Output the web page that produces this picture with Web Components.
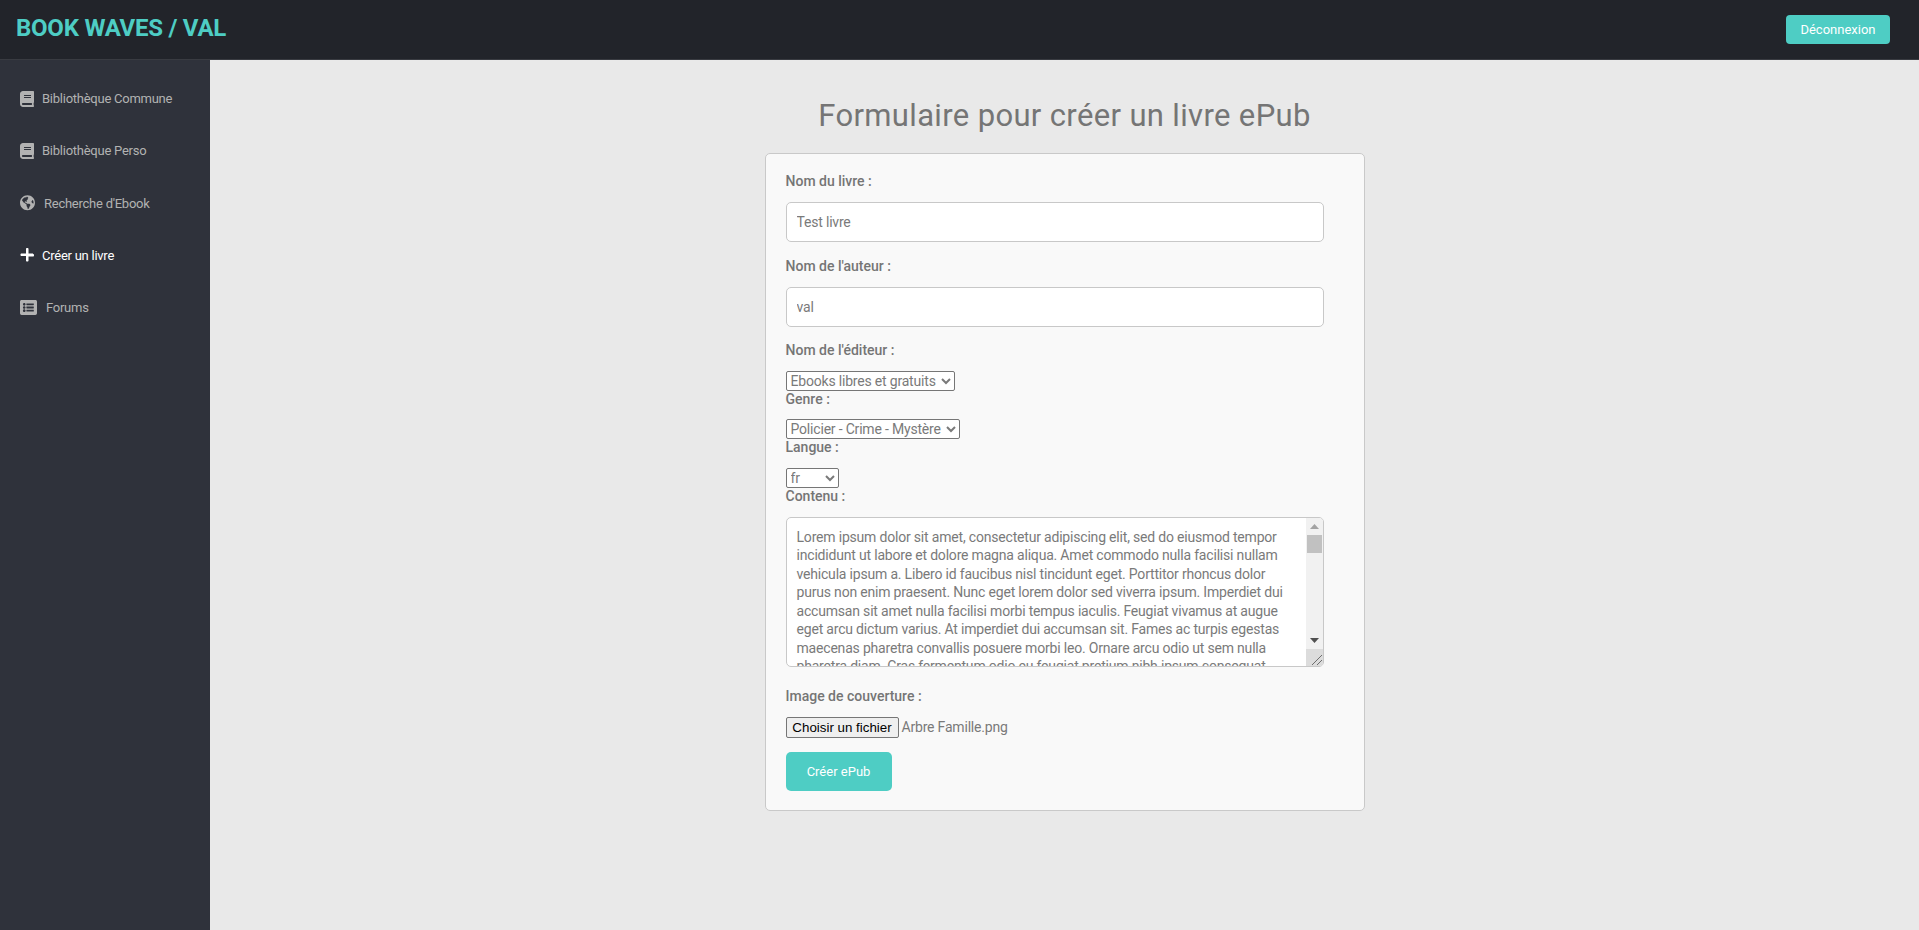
<!DOCTYPE html>
<html lang="fr">
<head>
<meta charset="utf-8">
<title>Book Waves</title>
<style>
	html, body { margin: 0; height: 100%; }
	body { font-family: Roboto, "Liberation Sans", sans-serif; }
</style>
</head>
<body>
<bw-app>
	<bw-topbar slot="top" title-text="BOOK WAVES / VAL" action="Déconnexion"></bw-topbar>
	<bw-sidebar slot="side">
		<bw-nav-item icon="book" gap="8">Bibliothèque Commune</bw-nav-item>
		<bw-nav-item icon="book" gap="8">Bibliothèque Perso</bw-nav-item>
		<bw-nav-item icon="globe" gap="9">Recherche d'Ebook</bw-nav-item>
		<bw-nav-item icon="plus" gap="8" active>Créer un livre</bw-nav-item>
		<bw-nav-item icon="list" gap="9">Forums</bw-nav-item>
	</bw-sidebar>
	<bw-epub-form></bw-epub-form>
</bw-app>

<script>
const ICONS = {
	book: ['0 0 448 512', 'M448 360V24c0-13.3-10.7-24-24-24H96C43 0 0 43 0 96v320c0 53 43 96 96 96h328c13.3 0 24-10.7 24-24v-16c0-7.5-3.5-14.3-8.9-18.7-4.2-15.4-4.2-59.3 0-74.7 5.4-4.3 8.9-11.1 8.9-18.6zM128 134c0-3.3 2.7-6 6-6h212c3.3 0 6 2.7 6 6v20c0 3.3-2.7 6-6 6H134c-3.3 0-6-2.7-6-6v-20zm0 64c0-3.3 2.7-6 6-6h212c3.3 0 6 2.7 6 6v20c0 3.3-2.7 6-6 6H134c-3.3 0-6-2.7-6-6v-20zm253.4 250H96c-17.7 0-32-14.3-32-32 0-17.6 14.4-32 32-32h285.4c-1.9 17.1-1.9 46.9 0 64z', 14],
	globe: ['0 0 496 512', 'M248 8C111.03 8 0 119.03 0 256s111.03 248 248 248 248-111.03 248-248S384.97 8 248 8zm82.29 357.6c-3.9 3.88-7.99 7.95-11.31 11.28-2.99 3-5.1 6.7-6.17 10.71-1.51 5.66-2.73 11.38-4.77 16.87l-17.39 46.85c-13.76 3-28 4.69-42.65 4.69v-27.38c1.69-12.62-7.64-36.26-22.63-51.25-6-6-9.37-14.14-9.37-22.63v-32.01c0-11.64-6.27-22.34-16.46-27.97-14.37-7.95-34.81-19.06-48.81-26.11-11.48-5.78-22.1-13.14-31.65-21.75l-.8-.72a114.792 114.792 0 0 1-18.06-20.74c-9.38-13.77-24.66-36.42-34.59-51.14 20.47-45.5 57.36-82.04 103.2-101.89l24.01 12.01C203.48 89.74 216 82.01 216 70.11v-11.3c7.99-1.29 16.12-2.11 24.42-2.43l28.3 28.3c6.25 6.25 6.25 16.38 0 22.63L264 112l-10.34 10.34c-3.12 3.12-3.12 8.19 0 11.31l4.69 4.69c3.12 3.12 3.12 8.19 0 11.31l-8 8a8.008 8.008 0 0 1-5.66 2.34h-8.99c-2.08 0-4.08.81-5.58 2.27l-9.92 9.65a8.008 8.008 0 0 0-1.58 9.31l15.59 31.19c2.66 5.32-1.21 11.58-7.15 11.58h-5.64c-1.93 0-3.79-.7-5.24-1.96l-9.28-8.06a16.017 16.017 0 0 0-15.55-3.1l-31.17 10.39a11.95 11.95 0 0 0-8.17 11.34c0 4.53 2.56 8.66 6.61 10.69l11.08 5.54c9.41 4.71 19.79 7.16 30.31 7.16s22.59 27.29 32 32h66.75c8.49 0 16.62 3.37 22.63 9.37l13.69 13.69a30.503 30.503 0 0 1 8.93 21.57 46.536 46.536 0 0 1-13.72 32.98zM417 274.25c-5.79-1.45-10.84-5-14.15-9.97l-17.98-26.97a23.97 23.97 0 0 1 0-26.62l19.59-29.38c2.32-3.47 5.5-6.29 9.24-8.15l12.98-6.49C440.2 193.59 448 223.87 448 256c0 8.67-.74 17.16-1.82 25.54L417 274.25z', 15],
	plus: ['0 0 448 512', 'M416 208H272V64c0-17.67-14.33-32-32-32h-16c-17.67 0-32 14.33-32 32v144H48c-17.67 0-32 14.33-32 32v16c0 17.67 14.33 32 32 32h144v144c0 17.67 14.33 32 32 32h16c17.67 0 32-14.33 32-32V304h144c17.67 0 32-14.33 32-32v-16c0-17.67-14.33-32-32-32z', 14],
	list: ['0 0 512 512', 'M464 480H48c-26.51 0-48-21.49-48-48V80c0-26.51 21.49-48 48-48h416c26.51 0 48 21.49 48 48v352c0 26.51-21.49 48-48 48zM128 120c-22.091 0-40 17.909-40 40s17.909 40 40 40 40-17.909 40-40-17.909-40-40-40zm0 96c-22.091 0-40 17.909-40 40s17.909 40 40 40 40-17.909 40-40-17.909-40-40-40zm0 96c-22.091 0-40 17.909-40 40s17.909 40 40 40 40-17.909 40-40-17.909-40-40-40zm288-136v-32c0-6.627-5.373-12-12-12H204c-6.627 0-12 5.373-12 12v32c0 6.627 5.373 12 12 12h200c6.627 0 12-5.373 12-12zm0 96v-32c0-6.627-5.373-12-12-12H204c-6.627 0-12 5.373-12 12v32c0 6.627 5.373 12 12 12h200c6.627 0 12-5.373 12-12zm0 96v-32c0-6.627-5.373-12-12-12H204c-6.627 0-12 5.373-12 12v32c0 6.627 5.373 12 12 12h200c6.627 0 12-5.373 12-12z', 17],
};

class BwApp extends HTMLElement {
	constructor() {
		super();
		this.attachShadow({mode: 'open'}).innerHTML = `
			<style>
				:host { display: grid; grid-template: 60px 1fr / 210px 1fr; height: 930px; overflow: hidden; background: #e9e9e9; }
				.top { grid-column: 1 / 3; }
			</style>
			<div class="top"><slot name="top"></slot></div>
			<slot name="side"></slot>
			<slot></slot>
		`;
	}
}

class BwTopbar extends HTMLElement {
	constructor() {
		super();
		this.attachShadow({mode: 'open'}).innerHTML = `
			<style>
				:host { display: flex; align-items: center; justify-content: space-between; box-sizing: border-box; height: 60px; padding: 0 29px 3px 16px; background: #22242a; border-bottom: 1px solid #393b41; }
				.brand { font-size: 24px; font-weight: 700; color: #4ecdc4; letter-spacing: -.25px; }
				button { font: inherit; font-size: 13px; color: #fff; background: #4ecdc4; border: 0; border-radius: 4px; width: 104px; height: 29px; padding: 0; margin-top: 2px; }
			</style>
			<span class="brand">${this.getAttribute('title-text')}</span>
			<button>${this.getAttribute('action')}</button>
		`;
	}
}

class BwSidebar extends HTMLElement {
	constructor() {
		super();
		this.attachShadow({mode: 'open'}).innerHTML = `
			<style>
				:host { display: flex; flex-direction: column; gap: 18.25px; box-sizing: border-box; padding-top: 21.5px; background: #2f323b; }
			</style>
			<slot></slot>
		`;
	}
}

class BwNavItem extends HTMLElement {
	constructor() {
		super();
		const [box, d, width] = ICONS[this.getAttribute('icon')];
		const active = this.hasAttribute('active');
		this.attachShadow({mode: 'open'}).innerHTML = `
			<style>
				:host { display: flex; align-items: center; height: 34px; padding-left: 20px; font-size: 13px; letter-spacing: -.25px; color: ${active ? '#fff' : '#b2b2b2'}; }
				svg { width: ${width}px; height: auto; margin-right: ${this.getAttribute('gap')}px; fill: currentColor; flex: none; }
			</style>
			<svg viewBox="${box}"><path d="${d}"/></svg>
			<slot></slot>
		`;
	}
}

class BwField extends HTMLElement {
	constructor() {
		super();
		this.attachShadow({mode: 'open'}).innerHTML = `
			<style>
				:host { display: block; }
				label { display: block; height: 17px; line-height: 17px; margin-bottom: 12px; font-size: 14px; font-weight: 500; color: #757575; letter-spacing: 0; }
			</style>
			<label>${this.getAttribute('label')}</label>
			<slot></slot>
		`;
	}
}

// fausse barre de defilement : le navigateur du rendu n'en peint aucune
class BwScrollbar extends HTMLElement {
	constructor() {
		super();
		this.attachShadow({mode: 'open'}).innerHTML = `
			<style>
				:host { position: absolute; top: 1px; right: 1px; bottom: 1px; width: 17px; display: flex; flex-direction: column; background: #f1f1f1; border-radius: 0 4px 4px 0; overflow: hidden; }
				.arrow { height: 17px; display: flex; align-items: center; justify-content: center; flex: none; }
				.thumb { height: 18px; margin: 0 1px; background: #c1c1c1; flex: none; }
				.rest { flex: 1; }
				.grip { height: 17px; background: #dcdcdc; flex: none; }
				svg { display: block; }
			</style>
			<div class="arrow"><svg width="9" height="5"><path d="M4.5 0 9 5H0z" fill="#a3a3a3"/></svg></div>
			<div class="thumb"></div>
			<div class="rest"></div>
			<div class="arrow"><svg width="9" height="5"><path d="M0 0h9L4.5 5z" fill="#505050"/></svg></div>
			<div class="grip"><svg width="17" height="17"><path d="M16 6 6 16M16 11l-5 5" stroke="#6e6e6e" fill="none"/></svg></div>
		`;
	}
}

const LOREM = `Lorem ipsum dolor sit amet, consectetur adipiscing elit, sed do eiusmod tempor
incididunt ut labore et dolore magna aliqua. Amet commodo nulla facilisi nullam
vehicula ipsum a. Libero id faucibus nisl tincidunt eget. Porttitor rhoncus dolor
purus non enim praesent. Nunc eget lorem dolor sed viverra ipsum. Imperdiet dui
accumsan sit amet nulla facilisi morbi tempus iaculis. Feugiat vivamus at augue
eget arcu dictum varius. At imperdiet dui accumsan sit. Fames ac turpis egestas
maecenas pharetra convallis posuere morbi leo. Ornare arcu odio ut sem nulla
pharetra diam. Cras fermentum odio eu feugiat pretium nibh ipsum consequat.`;

class BwEpubForm extends HTMLElement {
	constructor() {
		super();
		this.attachShadow({mode: 'open'}).innerHTML = `
			<style>
				:host { display: block; color: #7a7a7a; font-size: 14px; letter-spacing: -.19px; }
				h1 { margin: 0; padding-top: 38px; height: 55px; line-height: 36px; text-align: center; font-size: 31px; font-weight: 400; color: #757575; letter-spacing: .35px; }
				form { box-sizing: border-box; width: 600px; height: 658px; margin: 0 auto; padding: 19px 20px; background: #f9f9f9; border: 1px solid #c9c9c9; border-radius: 5px; }
				input[type=text], textarea { display: block; box-sizing: border-box; width: 538px; font: inherit; letter-spacing: inherit; color: #7a7a7a; background: #fff; border: 1px solid #c8c8c8; border-radius: 5px; padding: 0 10px; outline: 0; }
				input[type=text] { height: 40px; margin-bottom: 15.5px; }
				.first { margin-top: 1px; }
				select { display: block; font: inherit; letter-spacing: inherit; color: #7a7a7a; background: #fff; border: 1px solid #767676; border-radius: 2px; height: 20px; padding: 0; margin-top: -.5px; }
				.s-one { width: 169px; }
				.s-two { width: 174px; }
				.s-three { width: 53px; }
				.area { position: relative; width: 538px; height: 150px; margin-bottom: 21px; }
				textarea { width: 100%; height: 100%; padding: 10px; line-height: 18.5px; overflow: hidden; resize: none; white-space: pre; }
				.file { display: flex; align-items: center; gap: 3px; margin-bottom: 14px; height: 21px; }
				.file button { font: 13.33px "Liberation Sans", sans-serif; letter-spacing: 0; color: #000; background: #efefef; border: 1px solid #767676; border-radius: 2px; height: 21px; width: 113px; padding: 0; flex: none; }
				.send { display: block; width: 106px; height: 39px; padding: 0; font: inherit; font-size: 13px; letter-spacing: 0; color: #fff; background: #4ecdc4; border: 0; border-radius: 5px; }
			</style>
			<h1>Formulaire pour créer un livre ePub</h1>
			<form>
				<bw-field label="Nom du livre :"><input class="first" type="text" value="Test livre"></bw-field>
				<bw-field label="Nom de l'auteur :"><input type="text" value="val"></bw-field>
				<bw-field label="Nom de l'éditeur :"><select class="s-one"><option>Ebooks libres et gratuits</option></select></bw-field>
				<bw-field label="Genre :"><select class="s-two"><option>Policier - Crime - Mystère</option></select></bw-field>
				<bw-field label="Langue :"><select class="s-three"><option>fr</option></select></bw-field>
				<bw-field label="Contenu :"><div class="area"><textarea>${LOREM}</textarea><bw-scrollbar></bw-scrollbar></div></bw-field>
				<bw-field label="Image de couverture :">
					<div class="file"><button type="button">Choisir un fichier</button><span>Arbre Famille.png</span></div>
				</bw-field>
				<button type="button" class="send">Créer ePub</button>
			</form>
		`;
	}
}

customElements.define('bw-app', BwApp);
customElements.define('bw-topbar', BwTopbar);
customElements.define('bw-sidebar', BwSidebar);
customElements.define('bw-nav-item', BwNavItem);
customElements.define('bw-field', BwField);
customElements.define('bw-scrollbar', BwScrollbar);
customElements.define('bw-epub-form', BwEpubForm);
</script>
</body>
</html>
